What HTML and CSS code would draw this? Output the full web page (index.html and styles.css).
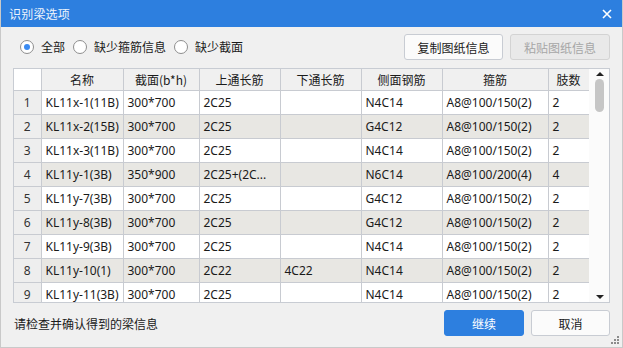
FILE: index.html
```html
<!DOCTYPE html>
<html lang="zh-CN">
<head>
<meta charset="UTF-8" />
<title>识别梁选项</title>
<link rel="stylesheet" href="styles.css">
</head>
<body>
  <div class="dialog">
    <div class="titlebar">
      <span class="title">识别梁选项</span>
      <svg class="close" width="10" height="10" viewBox="0 0 10 10"><path d="M1 1L9 9M9 1L1 9" stroke="#fff" stroke-width="1.6"/></svg>
    </div>

    <div class="content">
      <div class="toolbar">
        <label class="radio checked"><span class="dot"></span>全部</label>
        <label class="radio"><span class="dot"></span>缺少箍筋信息</label>
        <label class="radio"><span class="dot"></span>缺少截面</label>
        <div class="spacer"></div>
        <button class="btn">复制图纸信息</button>
        <button class="btn disabled">粘贴图纸信息</button>
      </div>

      <div class="grid">
        <div class="grid-body">
          <table>
            <colgroup>
              <col style="width:27px"><col style="width:82px"><col style="width:76px"><col style="width:81px">
              <col style="width:81px"><col style="width:81px"><col style="width:106px"><col style="width:41px">
            </colgroup>
            <thead>
              <tr><th class="corner"></th><th>名称</th><th>截面(b*h)</th><th>上通长筋</th><th>下通长筋</th><th>侧面钢筋</th><th>箍筋</th><th>肢数</th></tr>
            </thead>
            <tbody>
              <tr><td class="num">1</td><td>KL11x-1(11B)</td><td>300*700</td><td>2C25</td><td></td><td>N4C14</td><td>A8@100/150(2)</td><td>2</td></tr>
              <tr class="alt"><td class="num">2</td><td>KL11x-2(15B)</td><td>300*700</td><td>2C25</td><td></td><td>G4C12</td><td>A8@100/150(2)</td><td>2</td></tr>
              <tr><td class="num">3</td><td>KL11x-3(11B)</td><td>300*700</td><td>2C25</td><td></td><td>N4C14</td><td>A8@100/150(2)</td><td>2</td></tr>
              <tr class="alt"><td class="num">4</td><td>KL11y-1(3B)</td><td>350*900</td><td>2C25+(2C...</td><td></td><td>N6C14</td><td>A8@100/200(4)</td><td>4</td></tr>
              <tr><td class="num">5</td><td>KL11y-7(3B)</td><td>300*700</td><td>2C25</td><td></td><td>G4C12</td><td>A8@100/150(2)</td><td>2</td></tr>
              <tr class="alt"><td class="num">6</td><td>KL11y-8(3B)</td><td>300*700</td><td>2C25</td><td></td><td>G4C12</td><td>A8@100/150(2)</td><td>2</td></tr>
              <tr><td class="num">7</td><td>KL11y-9(3B)</td><td>300*700</td><td>2C25</td><td></td><td>N4C14</td><td>A8@100/150(2)</td><td>2</td></tr>
              <tr class="alt"><td class="num">8</td><td>KL11y-10(1)</td><td>300*700</td><td>2C22</td><td>4C22</td><td>N4C14</td><td>A8@100/150(2)</td><td>2</td></tr>
              <tr><td class="num">9</td><td>KL11y-11(3B)</td><td>300*700</td><td>2C25</td><td></td><td>N4C14</td><td>A8@100/150(2)</td><td>2</td></tr>
            </tbody>
          </table>
        </div>
        <div class="scrollbar">
          <span class="arrow up"></span>
          <span class="thumb"></span>
          <span class="track"></span>
          <span class="arrow down"></span>
        </div>
      </div>

      <div class="footer">
        <span class="hint">请检查并确认得到的梁信息</span>
        <div class="spacer"></div>
        <button class="btn primary">继续</button>
        <button class="btn">取消</button>
      </div>
    </div>
    <svg class="grip" width="8" height="8" viewBox="0 0 8 8" fill="#8c8c8c">
      <rect x="6" y="0" width="2" height="2"/><rect x="3" y="3" width="2" height="2"/><rect x="6" y="3" width="2" height="2"/>
      <rect x="0" y="6" width="2" height="2"/><rect x="3" y="6" width="2" height="2"/><rect x="6" y="6" width="2" height="2"/>
    </svg>
  </div>
</body>
</html>
```

FILE: styles.css
```css
* {
  box-sizing: border-box;
}
body {
  margin: 0;
  font-family: "Noto Sans", "Noto Sans CJK SC", sans-serif;
  font-size: 12px;
  color: #1a1a1a;
}
.dialog {
  position: relative;
  width: 623px;
  height: 348px;
  background: #f0f0f0;
  border: 1px solid #c9c9c9;
  border-top: none;
  overflow: hidden;
}
.titlebar {
  height: 27px;
  margin: 0 -1px;
  background: #2d7fdf;
  color: #fff;
  display: flex;
  align-items: center;
  padding: 0 8px 0 9px;
}
.title {
  flex: 1;
  font-family: "Noto Sans CJK SC", sans-serif;
  font-size: 12px;
  letter-spacing: 0.2px;
  color: #eef4fc;
}
.close {
  margin-right: 3px;
}
.content {
  padding: 7px 12px 0 12px;
}
.toolbar, .footer {
  display: flex;
  align-items: center;
  height: 26px;
}
.spacer {
  flex: 1;
}
.radio {
  display: flex;
  align-items: center;
  margin-left: 7px;
  padding-right: 1px;
}
.dot {
  width: 14px;
  height: 14px;
  border: 1px solid #8e8e8e;
  border-radius: 50%;
  background: #fff;
  margin-right: 7px;
  display: flex;
  align-items: center;
  justify-content: center;
}
.radio.checked .dot::after {
  content: "";
  width: 6px;
  height: 6px;
  border-radius: 50%;
  background: #3b8bf2;
}
.btn {
  font-family: "Noto Sans CJK SC", sans-serif;
  font-size: 12px;
  height: 26px;
  width: 99px;
  background: #fbfbfb;
  border: 1px solid #c8ccd3;
  border-radius: 3px;
  color: #1a1a1a;
  margin-left: 7px;
  padding: 0;
}
.btn.disabled {
  width: 100px;
  background: #e9e9e9;
  color: #a6a6a6;
  border-color: #d3d3d3;
}
.btn.primary {
  width: 80px;
  background: #2d7fdf;
  border-color: #2d7fdf;
  color: #fff;
}
.footer .btn:last-child {
  width: 79px;
}
.grid {
  margin-top: 8px;
  width: 597px;
  height: 235px;
  border: 1px solid #c8ccd3;
  display: flex;
  background: #fff;
}
.grid-body {
  width: 575px;
  overflow: hidden;
}
table {
  border-collapse: collapse;
  table-layout: fixed;
  width: 575px;
}
th, td {
  height: 24px;
  padding: 0 0 0 4px;
  border: 1px solid #c8cbd1;
  white-space: nowrap;
  overflow: hidden;
  text-align: left;
  font-weight: normal;
}
tr:first-child th, tbody tr:first-child td {
  border-top: none;
}
th:first-child, td:first-child {
  border-left: none;
}
th {
  height: 21px;
  background: #f0f0f0;
  text-align: center;
  padding: 0;
  font-family: "Noto Sans CJK SC", sans-serif;
}
th.corner {
  background: #fff;
}
td.num {
  background: #eeeeee;
  text-align: center;
  padding: 0;
  color: #333;
}
tr.alt td {
  background: #e8e7e3;
}
tr.alt td.num {
  background: #eeeeee;
}
.scrollbar {
  flex: 1;
  display: flex;
  flex-direction: column;
  align-items: center;
  background: #fbfbfb;
  padding: 3px 0 3px 1px;
}
.arrow {
  width: 0;
  height: 0;
  border-left: 4px solid transparent;
  border-right: 4px solid transparent;
}
.arrow.up {
  border-bottom: 4px solid #222;
}
.arrow.down {
  border-top: 4px solid #222;
}
.thumb {
  width: 9px;
  height: 33px;
  margin-top: 3px;
  background: #c6c6c6;
  border-radius: 5px;
}
.track {
  flex: 1;
}
.footer {
  margin-top: 7px;
}
.hint {
  font-family: "Noto Sans CJK SC", sans-serif;
  margin-left: 1px;
}
.grip {
  position: absolute;
  right: 3px;
  bottom: 3px;
}
```
